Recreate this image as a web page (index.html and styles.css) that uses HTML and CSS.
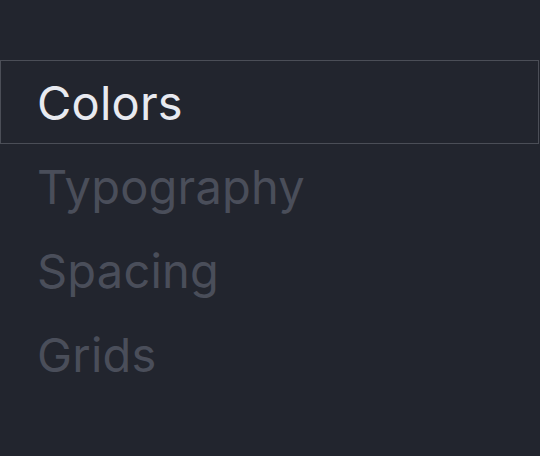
FILE: index.html
```html
<!DOCTYPE html>
<html>
  <head>
    <title>Style Guide</title>
    <link rel="stylesheet" href="styles.css">
  </head>

  <body>
    <nav class="menu">
      <a class="menu-item active" href="#colors">Colors</a>
      <a class="menu-item" href="#typography">Typography</a>
      <a class="menu-item" href="#spacing">Spacing</a>
      <a class="menu-item" href="#grids">Grids</a>
    </nav>
  </body>
</html>
```

FILE: styles.css
```css
body {
  margin: 0;
  background: #22252e;
  font-family: Inter, "Noto Sans", sans-serif;
}

.menu {
  display: flex;
  flex-direction: column;
  padding-top: 60px;
  margin-right: 1px;
}

.menu-item {
  display: flex;
  align-items: center;
  height: 84px;
  box-sizing: border-box;
  padding-left: 36px;
  border: 1px solid transparent;
  font-size: 47px;
  font-weight: 400;
  letter-spacing: 0.2px;
  color: #4a4e5a;
  text-decoration: none;
}

/* selected entry */
.menu-item.active {
  color: #e8eaf0;
  border-color: #4b4e57;
}
```
